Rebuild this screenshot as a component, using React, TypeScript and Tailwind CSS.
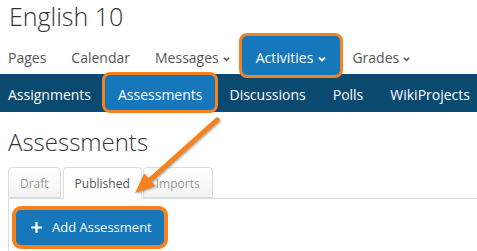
import React from "react";

const font = { fontFamily: '"Open Sans", "Liberation Sans", sans-serif' };

function Chevron({ className }: { className?: string }) {
  return (
    <svg viewBox="0 0 8 6" className={className} fill="none" stroke="currentColor" strokeWidth="1.8">
      <path d="M1 1.5 L4 4.5 L7 1.5" />
    </svg>
  );
}

const topNav = ["Pages", "Calendar", "Messages", "Activities", "Grades"];
const subNav = ["Assignments", "Assessments", "Discussions", "Polls", "WikiProjects"];

export default function App() {
  return (
    <div className="relative w-[477px] h-[251px] overflow-hidden bg-white text-[#555]" style={font}>
      <h1 className="pl-[9px] pt-[1px] mb-[1px] text-[25px] leading-[31px] font-light text-[#333]">English 10</h1>

      {/* top nav */}
      <div className="flex items-start gap-[25px] pl-[8px] h-[41px] text-[14px] leading-[19px]">
        {topNav.map((item) =>
          item === "Activities" ? (
            <div
              key={item}
              className="relative z-10 -mx-[16px] flex items-start gap-[5px] h-[45px] px-[14px] pt-[12px] rounded-[8px] border-[3px] border-[#f5821f] bg-[#1677ba] text-white"
            >
              {item}
              <Chevron className="w-[8px] h-[6px] mt-[8px]" />
            </div>
          ) : (
            <div key={item} className="flex items-start gap-[4px] pt-[15px]">
              {item}
              {(item === "Messages" || item === "Grades") && <Chevron className="w-[7px] h-[6px] mt-[8px]" />}
            </div>
          )
        )}
      </div>

      {/* section bar */}
      <div className="flex items-start gap-[27px] pl-[8px] h-[38px] bg-[#0b4a70] text-white text-[14px] leading-[19px]">
        {subNav.map((item) =>
          item === "Assessments" ? (
            <div
              key={item}
              className="relative z-10 -mx-[16px] -mt-[2px] h-[41px] px-[13px] pt-[10px] rounded-[8px] border-[3px] border-[#f5821f] bg-[#1677ba]"
            >
              {item}
            </div>
          ) : (
            <div key={item} className="pt-[11px]">
              {item}
            </div>
          )
        )}
      </div>

      <h2 className="pl-[8px] mt-[14px] text-[24px] leading-[32px] font-light text-[#333]">Assessments</h2>

      {/* tabs */}
      <div className="mt-[9px] ml-[8px] flex items-end gap-[1px] h-[31px] text-[12px] leading-[17px]">
        <div className="h-[31px] px-[11px] pt-[7px] rounded-t-[4px] border border-[#ddd] bg-gradient-to-b from-white to-[#f3f3f3] text-[#999]">
          Draft
        </div>
        <div className="ml-[1px] h-[32px] -mb-[1px] px-[11px] pt-[7px] rounded-t-[4px] border border-b-0 border-[#ddd] bg-white text-[#555]">
          Published
        </div>
        <div className="h-[31px] px-[12px] pt-[7px] rounded-t-[4px] border border-[#ddd] bg-gradient-to-b from-white to-[#f3f3f3] text-[#999]">
          Imports
        </div>
      </div>

      {/* panel */}
      <div className="ml-[8px] border-l border-t border-[#ddd] pt-[7px] pl-[3px] h-[60px]">
        <button className="flex items-center gap-[10px] h-[43px] w-[156px] pl-[15px] rounded-[9px] border-[4px] border-[#f5821f] bg-[#1677ba] text-white text-[13px]">
          <svg viewBox="0 0 12 12" className="w-[11px] h-[11px]" stroke="currentColor" strokeWidth="2.4">
            <path d="M6 0 V12 M0 6 H12" />
          </svg>
          Add Assessment
        </button>
      </div>

      {/* annotation arrow */}
      <svg
        className="absolute left-0 top-0 w-[477px] h-[251px] pointer-events-none drop-shadow-[1px_1px_1px_rgba(0,0,0,0.35)]"
        viewBox="0 0 477 251"
      >
        <path d="M217 120 L150 180" stroke="#f5821f" strokeWidth="5" strokeLinecap="round" />
        <polygon points="135,193 155.5,186 144.2,173.4" fill="#f5821f" />
      </svg>
    </div>
  );
}
